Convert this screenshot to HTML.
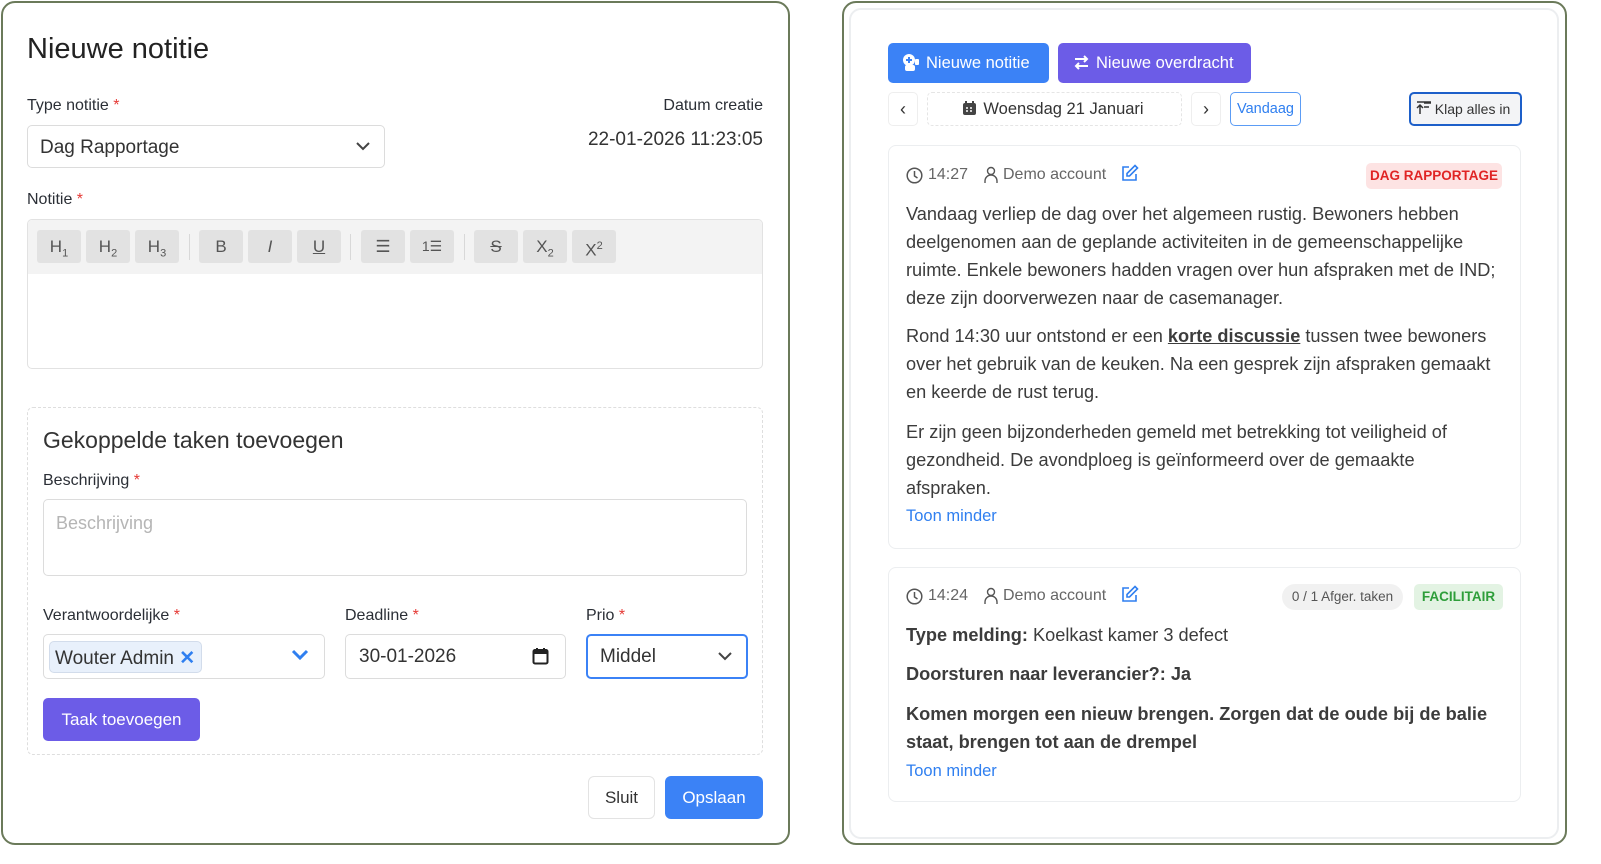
<!DOCTYPE html>
<html><head><meta charset="utf-8"><style>
*{box-sizing:border-box;margin:0;padding:0}
body{width:1601px;height:864px;background:#fff;font-family:"Liberation Sans",sans-serif;color:#333;position:relative;overflow:hidden}
.a{position:absolute}
.lp{left:1px;top:1px;width:789px;height:844px;border:2px solid #6b7a5a;border-radius:14px}
.rp{left:842px;top:1px;width:725px;height:844px;border:2px solid #6b7a5a;border-radius:14px}
.rin{left:849px;top:8px;width:710px;height:831px;border:2px solid #eceef0;border-radius:12px}
.lbl{font-size:16px;color:#2b2f36}
.st{color:#e53935}
.inp{border:1px solid #dcdcdc;border-radius:5px;background:#fff}
.tb{top:230px;height:33px;width:44px;background:#e2e2e2;border-radius:3px;text-align:center;line-height:33px;font-size:17px;color:#555}
.card{border:1px solid #eceef0;border-radius:8px;background:#fff}
.p{font-size:18.2px;line-height:28px;color:#3c3c3c}
.link{color:#2f7ff0;font-size:16.5px}
</style></head><body>
<div class="a lp"></div>
<div class="a" style="left:27px;top:33px;font-size:29px;color:#222">Nieuwe notitie</div>
<div class="a lbl" style="left:27px;top:97px">Type notitie <span class="st">*</span></div>
<div class="a inp" style="left:27px;top:125px;width:358px;height:43px;font-size:19px;padding:11px 12px;color:#333">Dag Rapportage
<svg class="a" style="right:13px;top:15px" width="16" height="10" viewBox="0 0 16 10"><path d="M2 2l6 6 6-6" fill="none" stroke="#444" stroke-width="2"/></svg></div>
<div class="a lbl" style="right:838px;top:97px">Datum creatie</div>
<div class="a" style="right:838px;top:129px;font-size:19px;color:#333">22-01-2026 11:23:05</div>
<div class="a lbl" style="left:27px;top:191px">Notitie <span class="st">*</span></div>
<div class="a" style="left:27px;top:219px;width:736px;height:150px;border:1px solid #e2e2e2;border-radius:5px;overflow:hidden"><div style="height:54px;background:#f3f3f3"></div></div>
<div class="a tb" style="left:37px">H<sub style="font-size:11px">1</sub></div>
<div class="a tb" style="left:86px">H<sub style="font-size:11px">2</sub></div>
<div class="a tb" style="left:135px">H<sub style="font-size:11px">3</sub></div>
<div class="a" style="left:189px;top:234px;width:1px;height:26px;background:#d8d8d8"></div>
<div class="a tb" style="left:199px">B</div>
<div class="a tb" style="left:248px;font-style:italic">I</div>
<div class="a tb" style="left:297px;text-decoration:underline">U</div>
<div class="a" style="left:350px;top:234px;width:1px;height:26px;background:#d8d8d8"></div>
<div class="a tb" style="left:361px">☰</div>
<div class="a tb" style="left:410px;font-size:14px">1☰</div>
<div class="a" style="left:464px;top:234px;width:1px;height:26px;background:#d8d8d8"></div>
<div class="a tb" style="left:474px;text-decoration:line-through">S</div>
<div class="a tb" style="left:523px">X<sub style="font-size:11px">2</sub></div>
<div class="a tb" style="left:572px">X<sup style="font-size:11px">2</sup></div>
<div class="a" style="left:27px;top:407px;width:736px;height:348px;border:1px dashed #dedede;border-radius:6px"></div>
<div class="a" style="left:43px;top:427px;font-size:23px;color:#333">Gekoppelde taken toevoegen</div>
<div class="a lbl" style="left:43px;top:472px">Beschrijving <span class="st">*</span></div>
<div class="a inp" style="left:43px;top:499px;width:704px;height:77px;padding:13px 12px;font-size:18px;color:#b5b5b5">Beschrijving</div>
<div class="a lbl" style="left:43px;top:607px">Verantwoordelijke <span class="st">*</span></div>
<div class="a inp" style="left:43px;top:634px;width:282px;height:45px"></div>
<div class="a" style="left:49px;top:641px;width:153px;height:32px;background:#e8f0fb;border:1px solid #d2dceb;border-radius:5px;font-size:19px;padding:5px 5px;color:#333">Wouter Admin <span style="color:#2f7ff0;font-weight:bold">✕</span></div>
<svg class="a" style="left:291px;top:649px" width="18" height="12" viewBox="0 0 18 12"><path d="M2 2l7 7 7-7" fill="none" stroke="#2f7ff0" stroke-width="3"/></svg>
<div class="a lbl" style="left:345px;top:607px">Deadline <span class="st">*</span></div>
<div class="a inp" style="left:345px;top:634px;width:221px;height:45px;padding:11px 13px;font-size:19px;color:#333">30-01-2026</div>
<svg class="a" style="left:532px;top:647px" width="17" height="18" viewBox="0 0 17 18"><rect x="1.5" y="3" width="14" height="13.5" rx="1.5" fill="none" stroke="#222" stroke-width="2"/><rect x="1.5" y="3" width="14" height="4" fill="#222"/><path d="M5 1v3M12 1v3" stroke="#222" stroke-width="2"/></svg>
<div class="a lbl" style="left:586px;top:607px">Prio <span class="st">*</span></div>
<div class="a" style="left:586px;top:634px;width:162px;height:45px;border:2px solid #3b82f6;border-radius:5px;padding:10px 12px;font-size:19px;color:#333">Middel
<svg class="a" style="right:13px;top:15px" width="16" height="10" viewBox="0 0 16 10"><path d="M2 2l6 6 6-6" fill="none" stroke="#444" stroke-width="2"/></svg></div>
<div class="a" style="left:43px;top:698px;width:157px;height:43px;background:#6c5ce7;border-radius:5px;color:#fff;font-size:17px;text-align:center;line-height:43px">Taak toevoegen</div>
<div class="a" style="left:588px;top:776px;width:67px;height:43px;border:1px solid #e3e3e3;border-radius:6px;text-align:center;line-height:41px;font-size:17px;color:#333">Sluit</div>
<div class="a" style="left:665px;top:776px;width:98px;height:43px;background:#3b82f6;border-radius:6px;text-align:center;line-height:43px;font-size:17px;color:#fff">Opslaan</div>

<div class="a rp"></div>
<div class="a rin"></div>
<div class="a" style="left:888px;top:43px;width:161px;height:40px;background:#3b82f6;border-radius:5px;color:#fff;font-size:16.5px;line-height:40px;padding-left:38px">Nieuwe notitie</div>
<svg class="a" style="left:902px;top:53px" width="18" height="19" viewBox="0 0 18 19"><circle cx="7" cy="7" r="6" fill="#fff"/><path d="M7 4v6M4 7h6" stroke="#3b82f6" stroke-width="2"/><rect x="3" y="12" width="10" height="6" rx="2" fill="#fff"/><rect x="13" y="6" width="4" height="6" rx="1" fill="#fff"/></svg>
<div class="a" style="left:1058px;top:43px;width:193px;height:40px;background:#6c5ce7;border-radius:5px;color:#fff;font-size:16.5px;line-height:40px;padding-left:38px">Nieuwe overdracht</div>
<svg class="a" style="left:1073px;top:54px" width="17" height="17" viewBox="0 0 17 17"><path d="M2 5h12M11 2l3 3-3 3M15 12H3M6 9l-3 3 3 3" fill="none" stroke="#fff" stroke-width="2"/></svg>
<div class="a inp" style="left:888px;top:92px;width:30px;height:34px;border-color:#eee;text-align:center;line-height:32px;font-size:18px">‹</div>
<div class="a" style="left:927px;top:92px;width:255px;height:34px;border:1px dashed #e5e5e5;border-radius:5px;text-align:center;line-height:33px;font-size:16.5px;color:#333;padding-left:18px">Woensdag 21 Januari</div>
<svg class="a" style="left:962px;top:101px" width="15" height="15" viewBox="0 0 15 15"><rect x="1" y="2" width="13" height="12" rx="2" fill="#444"/><path d="M4 0v3M11 0v3" stroke="#444" stroke-width="2"/><path d="M4 7h2M8 7h2M4 10h2M8 10h2" stroke="#fff" stroke-width="1.5"/></svg>
<div class="a inp" style="left:1191px;top:92px;width:30px;height:34px;border-color:#eee;text-align:center;line-height:32px;font-size:18px">›</div>
<div class="a" style="left:1230px;top:92px;width:71px;height:34px;border:1px solid #5b9cf5;border-radius:5px;text-align:center;line-height:32px;font-size:14.5px;color:#2f7ff0">Vandaag</div>
<div class="a" style="left:1409px;top:92px;width:113px;height:34px;border:2px solid #1d5fc9;border-radius:5px;background:#f3f4f6;text-align:center;line-height:30px;font-size:14px;color:#333;padding-left:14px">Klap alles in</div>
<svg class="a" style="left:1416px;top:101px" width="16" height="14" viewBox="0 0 16 14"><path d="M4 13V4M1 7l3-3 3 3M8 2h7M8 6h5M1 1h14" fill="none" stroke="#333" stroke-width="1.5"/></svg>

<div class="a card" style="left:888px;top:145px;width:633px;height:404px"></div>
<svg class="a" style="left:906px;top:167px" width="17" height="17" viewBox="0 0 17 17"><circle cx="8.5" cy="8.5" r="7.3" fill="none" stroke="#555" stroke-width="1.5"/><path d="M8.5 4v5l3 2" fill="none" stroke="#555" stroke-width="1.5"/></svg>
<div class="a" style="left:928px;top:166px;font-size:16px;color:#666">14:27</div>
<svg class="a" style="left:984px;top:166px" width="14" height="18" viewBox="0 0 14 18"><circle cx="7" cy="5" r="3.5" fill="none" stroke="#555" stroke-width="1.4"/><path d="M1 17v-2a6 6 0 0 1 12 0v2" fill="none" stroke="#555" stroke-width="1.4"/></svg>
<div class="a" style="left:1003px;top:166px;font-size:16px;color:#666">Demo account</div>
<svg class="a" style="left:1121px;top:164px" width="18" height="18" viewBox="0 0 18 18"><path d="M8 3H2v13h13v-6" fill="none" stroke="#2f7ff0" stroke-width="1.6"/><path d="M14 1.5l2.5 2.5-8 8H6v-2.5z" fill="none" stroke="#2f7ff0" stroke-width="1.6"/></svg>
<div class="a" style="left:1366px;top:163px;width:136px;height:26px;background:#fde3e3;border-radius:5px;color:#e02424;font-size:13.5px;font-weight:bold;text-align:center;line-height:26px">DAG RAPPORTAGE</div>
<div class="a p" style="left:906px;top:200px;width:598px">Vandaag verliep de dag over het algemeen rustig. Bewoners hebben deelgenomen aan de geplande activiteiten in de gemeenschappelijke ruimte. Enkele bewoners hadden vragen over hun afspraken met de IND; deze zijn doorverwezen naar de casemanager.</div>
<div class="a p" style="left:906px;top:322px;width:598px">Rond 14:30 uur ontstond er een <b style="text-decoration:underline">korte discussie</b> tussen twee bewoners over het gebruik van de keuken. Na een gesprek zijn afspraken gemaakt en keerde de rust terug.</div>
<div class="a p" style="left:906px;top:418px;width:598px">Er zijn geen bijzonderheden gemeld met betrekking tot veiligheid of gezondheid. De avondploeg is geïnformeerd over de gemaakte afspraken.</div>
<div class="a link" style="left:906px;top:507px">Toon minder</div>

<div class="a card" style="left:888px;top:567px;width:633px;height:235px"></div>
<svg class="a" style="left:906px;top:588px" width="17" height="17" viewBox="0 0 17 17"><circle cx="8.5" cy="8.5" r="7.3" fill="none" stroke="#555" stroke-width="1.5"/><path d="M8.5 4v5l3 2" fill="none" stroke="#555" stroke-width="1.5"/></svg>
<div class="a" style="left:928px;top:587px;font-size:16px;color:#666">14:24</div>
<svg class="a" style="left:984px;top:587px" width="14" height="18" viewBox="0 0 14 18"><circle cx="7" cy="5" r="3.5" fill="none" stroke="#555" stroke-width="1.4"/><path d="M1 17v-2a6 6 0 0 1 12 0v2" fill="none" stroke="#555" stroke-width="1.4"/></svg>
<div class="a" style="left:1003px;top:587px;font-size:16px;color:#666">Demo account</div>
<svg class="a" style="left:1121px;top:585px" width="18" height="18" viewBox="0 0 18 18"><path d="M8 3H2v13h13v-6" fill="none" stroke="#2f7ff0" stroke-width="1.6"/><path d="M14 1.5l2.5 2.5-8 8H6v-2.5z" fill="none" stroke="#2f7ff0" stroke-width="1.6"/></svg>
<div class="a" style="left:1282px;top:584px;width:121px;height:26px;background:#f1f1f1;border-radius:13px;color:#555;font-size:13.5px;text-align:center;line-height:26px">0 / 1 Afger. taken</div>
<div class="a" style="left:1414px;top:584px;width:89px;height:26px;background:#e3f3e3;border-radius:5px;color:#2e9e3a;font-size:13.5px;font-weight:bold;text-align:center;line-height:26px">FACILITAIR</div>
<div class="a p" style="left:906px;top:621px"><b>Type melding:</b> Koelkast kamer 3 defect</div>
<div class="a p" style="left:906px;top:660px"><b>Doorsturen naar leverancier?: Ja</b></div>
<div class="a p" style="left:906px;top:700px;width:598px"><b>Komen morgen een nieuw brengen. Zorgen dat de oude bij de balie staat, brengen tot aan de drempel</b></div>
<div class="a link" style="left:906px;top:762px">Toon minder</div>
</body></html>
